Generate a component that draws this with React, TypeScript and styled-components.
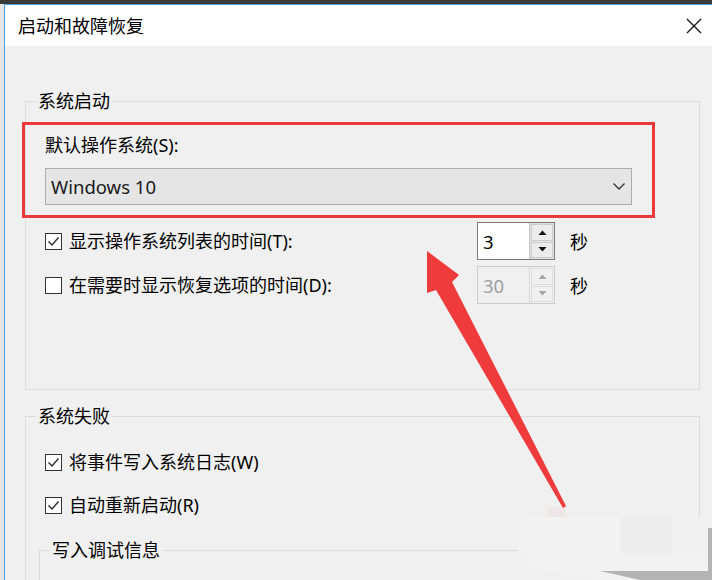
import styled, { createGlobalStyle } from 'styled-components';

const GlobalStyle = createGlobalStyle`
  html, body {
    margin: 0;
    padding: 0;
    background: #e6e6e6;
  }
  body {
    font-family: "Noto Sans", "Noto Sans CJK SC", sans-serif;
    color: #000;
  }
`;

const Check = () => (
  <svg width="15" height="15" viewBox="0 0 15 15">
    <polyline points="2.5,7.5 6,11 12.5,3.5" fill="none" stroke="#333" strokeWidth="1.5" />
  </svg>
);

const Chevron = () => (
  <svg width="12" height="7" viewBox="0 0 12 7">
    <polyline points="0.5,0.5 6,6 11.5,0.5" fill="none" stroke="#333" strokeWidth="1.3" />
  </svg>
);

const Triangle = ({ up, color }: { up?: boolean; color: string }) => (
  <svg width="9" height="5" viewBox="0 0 9 5">
    <polygon points={up ? '0.5,5 4.5,0.5 8.5,5' : '0.5,0 4.5,4.5 8.5,0'} fill={color} />
  </svg>
);

type OptionProps = { label: string; checked: boolean };

const CheckOption = ({ label, checked }: OptionProps) => (
  <CheckLabel>
    <Box>{checked && <Check />}</Box>
    {label}
  </CheckLabel>
);

const Spin = ({ value, disabled }: { value: string; disabled?: boolean }) => (
  <Spinner $disabled={disabled}>
    <SpinValue $disabled={disabled}>{value}</SpinValue>
    <SpinButtons $disabled={disabled}>
      <SpinBtn $disabled={disabled}>
        <Triangle up color={disabled ? '#a6a6a6' : '#111'} />
      </SpinBtn>
      <SpinBtn $disabled={disabled}>
        <Triangle color={disabled ? '#a6a6a6' : '#111'} />
      </SpinBtn>
    </SpinButtons>
  </Spinner>
);

const App = () => {
  return (
    <Screen>
      <GlobalStyle />
      <TopStrip />
      <Desktop>
        <Window>
          <TitleBar>
            <Title>启动和故障恢复</Title>
            <CloseIcon width="16" height="16" viewBox="0 0 16 16">
              <path d="M1 1 L15 15 M15 1 L1 15" stroke="#111" strokeWidth="1.3" />
            </CloseIcon>
          </TitleBar>

          <Body>
            <Group $height={289}>
              <Legend>系统启动</Legend>
              <Highlight>
                <Text>默认操作系统(S):</Text>
                <Combo>
                  <span>Windows 10</span>
                  <Chevron />
                </Combo>
              </Highlight>

              <TimeRows>
                <TimeRow>
                  <CheckOption label="显示操作系统列表的时间(T):" checked />
                  <Spin value="3" />
                  <Unit>秒</Unit>
                </TimeRow>
                <TimeRow>
                  <CheckOption label="在需要时显示恢复选项的时间(D):" checked={false} />
                  <Spin value="30" disabled />
                  <Unit>秒</Unit>
                </TimeRow>
              </TimeRows>
            </Group>

            <FailGroup $height={220}>
              <Legend>系统失败</Legend>
              <FailRows>
                <CheckOption label="将事件写入系统日志(W)" checked />
                <CheckOption label="自动重新启动(R)" checked />
              </FailRows>
              <DebugGroup $height={120}>
                <Legend>写入调试信息</Legend>
              </DebugGroup>
            </FailGroup>
          </Body>
        </Window>
      </Desktop>

      {/* smudge left over from the screenshot, bottom right */}
      <Overlay viewBox="0 0 712 580">
        <path
          d="M522 517 L712 517 L712 580 L600 580 L560 574 L530 568 L516 548 Z"
          fill="#f2f2f2"
        />
        <rect x="547" y="507" width="18" height="10" fill="#efe7e7" />
        <rect x="565" y="507" width="55" height="10" fill="#efefef" />
        <rect x="620" y="517" width="52" height="36" fill="#ededed" />
        <rect x="672" y="517" width="36" height="36" fill="#f1f1f1" />
        <path
          d="M600 571 L708 571 L708 528 L712 528 L712 580 L640 580 Z"
          fill="#b4b4b4"
        />
      </Overlay>

      {/* red arrow annotation */}
      <Overlay viewBox="0 0 712 580">
        <polygon
          points="427,251 459,275 452,282 566,506 563,508 436,290 427,293"
          fill="#ef3b3b"
        />
      </Overlay>
    </Screen>
  );
};

const Screen = styled.div`
  position: relative;
  width: 712px;
  height: 580px;
  overflow: hidden;
  display: flex;
  flex-direction: column;
  background: #e6e6e6;
`;

const TopStrip = styled.div`
  height: 4px;
  flex-shrink: 0;
  background: #3a3a3a;
`;

const Desktop = styled.div`
  flex: 1;
  padding-left: 4px;
  display: flex;
  min-height: 0;
`;

const Window = styled.div`
  flex: 1;
  border-top: 1px solid #4a9de4;
  border-left: 1px solid #4a9de4;
  background: #f0f0f0;
  display: flex;
  flex-direction: column;
`;

const TitleBar = styled.div`
  box-sizing: border-box;
  height: 41px;
  flex-shrink: 0;
  background: #fff;
  display: flex;
  align-items: center;
  justify-content: space-between;
  padding: 1px 10px 0 13px;
`;

const Title = styled.div`
  font-size: 18px;
  line-height: 24px;
  color: #000;
`;

const CloseIcon = styled.svg`
  display: block;
`;

const Body = styled.div`
  padding: 55px 0 0 20px;
`;

const Group = styled.div<{ $height: number }>`
  position: relative;
  box-sizing: border-box;
  width: 675px;
  height: ${(p) => p.$height}px;
  border: 1px solid #dcdcdc;
  padding-top: 20px;
`;

const FailGroup = styled(Group)`
  margin-top: 26px;
  padding-top: 33px;
`;

const DebugGroup = styled(Group)`
  width: auto;
  margin: 33px 12px 0 13px;
  padding-top: 0;
`;

const Legend = styled.div`
  position: absolute;
  top: -13px;
  left: 10px;
  padding: 0 2px;
  background: #f0f0f0;
  font-size: 18px;
  line-height: 24px;
  color: #000;
`;

const Highlight = styled.div`
  box-sizing: border-box;
  width: 633px;
  margin-left: -4px;
  border: 3px solid #ec3a3c;
  padding: 8px 20px 10px 20px;
`;

const Text = styled.div`
  font-size: 18px;
  line-height: 24px;
`;

const Combo = styled.div`
  margin-top: 11px;
  box-sizing: border-box;
  height: 37px;
  border: 1px solid #adadad;
  background: #e5e5e5;
  display: flex;
  align-items: center;
  justify-content: space-between;
  padding: 0 6px 0 5px;
  font-size: 18.5px;
  color: #1a1a1a;
`;

const TimeRows = styled.div`
  margin: 4px 0 0 19px;
  display: flex;
  flex-direction: column;
  gap: 6px;
`;

const TimeRow = styled.div`
  display: grid;
  grid-template-columns: 432px 78px auto;
  align-items: center;
  height: 38px;
`;

const CheckLabel = styled.label`
  display: flex;
  align-items: center;
  font-size: 18px;
  line-height: 24px;
  color: #000;
`;

const Box = styled.span`
  box-sizing: border-box;
  width: 17px;
  height: 17px;
  border: 1px solid #333;
  background: #fff;
  margin-right: 7px;
  display: flex;
  align-items: center;
  justify-content: center;
`;

const Spinner = styled.div<{ $disabled?: boolean }>`
  box-sizing: border-box;
  height: 38px;
  display: flex;
  border: 1px solid ${(p) => (p.$disabled ? '#cccccc' : '#7a7a7a')};
  background: ${(p) => (p.$disabled ? '#f0f0f0' : '#fff')};
`;

const SpinValue = styled.div<{ $disabled?: boolean }>`
  flex: 1;
  display: flex;
  align-items: center;
  padding-left: 5px;
  font-size: 18.5px;
  color: ${(p) => (p.$disabled ? '#9d9d9d' : '#000')};
`;

const SpinButtons = styled.div<{ $disabled?: boolean }>`
  width: 25px;
  display: flex;
  flex-direction: column;
  gap: 1px;
  padding: 1px;
  box-sizing: border-box;
  background: ${(p) => (p.$disabled ? '#f0f0f0' : '#e3e3e3')};
  border-left: 1px solid ${(p) => (p.$disabled ? '#dadada' : '#c4c4c4')};
`;

const SpinBtn = styled.div<{ $disabled?: boolean }>`
  flex: 1;
  display: flex;
  align-items: center;
  justify-content: center;
  background: ${(p) => (p.$disabled ? '#f0f0f0' : '#ececec')};
  border: 1px solid ${(p) => (p.$disabled ? '#dedede' : '#cdcdcd')};
`;

const Unit = styled.span`
  margin-left: 15px;
  font-size: 18px;
  color: #000;
`;

const FailRows = styled.div`
  margin-left: 19px;
  display: flex;
  flex-direction: column;
  gap: 19px;
`;

const Overlay = styled.svg`
  position: absolute;
  top: 0;
  left: 0;
  width: 712px;
  height: 580px;
  pointer-events: none;
`;

export default App;
